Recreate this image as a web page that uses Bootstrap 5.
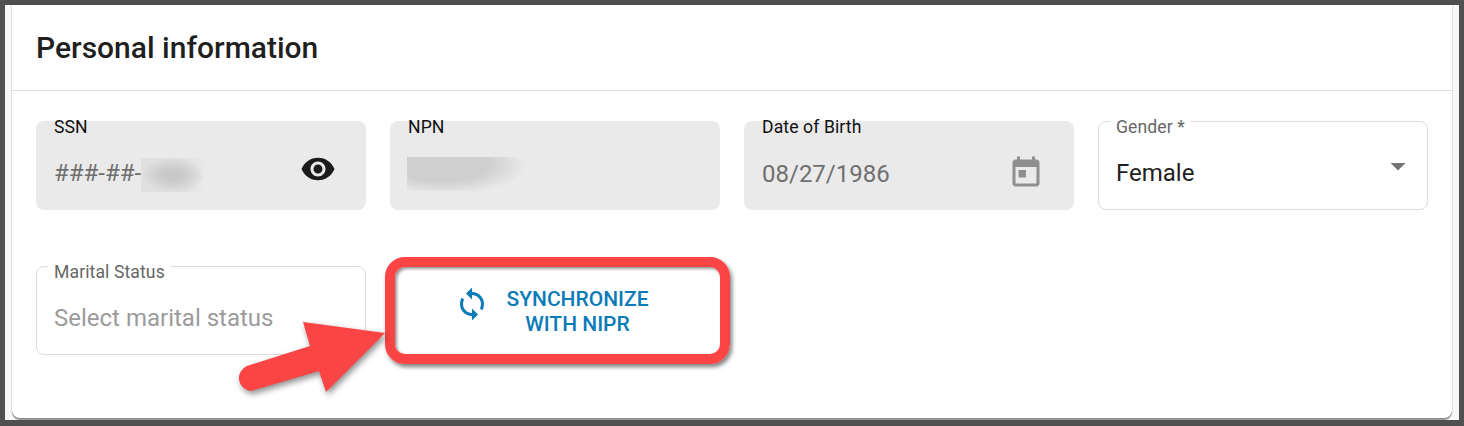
<!DOCTYPE html>
<html lang="en">
<head>
<meta charset="utf-8">
<title>Personal information</title>
<link href="https://cdn.jsdelivr.net/npm/bootstrap@5.3.0/dist/css/bootstrap.min.css" rel="stylesheet">
<style>
html,body{height:100%}
body{background:#505050;padding:5px;font-family:Roboto,"Liberation Sans",sans-serif;overflow:hidden}
.shot-frame{background:#f8f8f8;height:415px;padding:0 7px;position:relative}
.info-card{height:413px;border:0;border-radius:0 0 8px 8px;box-shadow:0 2px 1px rgba(0,0,0,.4),0 0 3px rgba(0,0,0,.12);background:#fff}
.info-head{height:86px;background:#fff;border-bottom:1px solid #dedede;padding:0 24px;font-size:30px;font-weight:500;color:#1f1f1f;line-height:1;padding-top:28px}
.info-body{padding:30px 24px 0}
.fld{height:89px;border-radius:8px;position:relative;padding:0 18px;display:flex;align-items:center;font-size:24px;margin-bottom:56px}
.fld-fill{background:#eaeaea;color:#6f6f6f}
.fld-line{background:#fff;border:1px solid #dcdcdc;color:#1f1f1f;padding-left:17px}
.fld-label{position:absolute;top:-3px;left:18px;font-size:17.6px;line-height:18px;color:#111;letter-spacing:.1px}
.fld-line .fld-label{left:11px;top:-4px;padding:0 6px;background:#fff;color:#666}
.fld-line .fld-value{margin-top:15px}
.fld-fill .fld-value{margin-top:16px}
.ph{color:#9b9b9b}
.mask-a{display:inline-block;width:65px;height:34px;vertical-align:middle;background:radial-gradient(ellipse 32px 17px at 32px 17px,#c9c9c9 30%,rgba(201,201,201,0) 100%),linear-gradient(to right,#e0e0e0 70%,#eaeaea 100%)}
.mask-b{display:block;width:118px;height:34px;margin-left:-1px;background:radial-gradient(ellipse 85px 30px at 35px 8px,#cfcfcf 55%,rgba(207,207,207,0) 100%)}
.fld-end{margin-left:auto;flex:none}
.end-eye{margin-right:12px;margin-top:6px}
.end-cal{margin-right:12px;margin-top:14px}
.end-caret{margin-right:-7px}
.sync-btn{height:89px;background:#fff;border:0;padding:0 7px 0 0;width:100%;display:flex;align-items:center;justify-content:center;gap:16px;color:#0a7bb9;font-size:21px;font-weight:500;line-height:25px;text-transform:uppercase;position:relative;z-index:2}
.sync-btn svg{margin-bottom:14px;flex:none}
.sync-text{text-align:center;display:block;margin-top:2px}
.sync-wrap{position:relative}
.red-box{position:absolute;left:-5px;top:-9px;width:345px;height:107px;border:10px solid #fb4444;border-radius:20px;box-shadow:2px 3px 4px rgba(0,0,0,.5),inset 2px 2px 3px rgba(0,0,0,.4);z-index:3;pointer-events:none}
.red-arrow{position:absolute;left:-5px;top:-5px;width:1464px;height:426px;z-index:4;pointer-events:none;filter:drop-shadow(2px 3px 3px rgba(0,0,0,.45))}
</style>
</head>
<body>
<div class="shot-frame">
  <div class="card info-card">
    <div class="card-header info-head">Personal information</div>
    <div class="card-body info-body">
      <div class="row gx-4">
        <div class="col-3">
          <div class="fld fld-fill">
            <span class="fld-label">SSN</span>
            <span class="fld-value">###-##-<span class="mask-a"></span></span>
            <svg class="fld-end end-eye" width="36" height="36" viewBox="0 0 24 24" fill="#1b1b1b"><path d="M12 4.5C7 4.5 2.73 7.61 1 12c1.73 4.39 6 7.5 11 7.5s9.27-3.11 11-7.5c-1.73-4.39-6-7.5-11-7.5zM12 17c-2.76 0-5-2.24-5-5s2.24-5 5-5 5 2.24 5 5-2.24 5-5 5zm0-8c-1.66 0-3 1.34-3 3s1.34 3 3 3 3-1.34 3-3-1.34-3-3-3z"/></svg>
          </div>
        </div>
        <div class="col-3">
          <div class="fld fld-fill">
            <span class="fld-label">NPN</span>
            <span class="fld-value"><span class="mask-b"></span></span>
          </div>
        </div>
        <div class="col-3">
          <div class="fld fld-fill">
            <span class="fld-label">Date of Birth</span>
            <span class="fld-value">08/27/1986</span>
            <svg class="fld-end end-cal" width="36" height="36" viewBox="0 0 24 24" fill="#8f8f8f"><path d="M19 3h-1V1h-2v2H8V1H6v2H5c-1.11 0-1.99.9-1.99 2L3 19c0 1.1.89 2 2 2h14c1.1 0 2-.9 2-2V5c0-1.1-.9-2-2-2zm0 16H5V8h14v11zM7 10h5v5H7z"/></svg>
          </div>
        </div>
        <div class="col-3">
          <div class="fld fld-line">
            <span class="fld-label">Gender *</span>
            <span class="fld-value">Female</span>
            <svg class="fld-end end-caret" width="36" height="36" viewBox="0 0 24 24" fill="#757575"><path d="M7 10l5 5 5-5z"/></svg>
          </div>
        </div>
        <div class="col-3">
          <div class="fld fld-line">
            <span class="fld-label">Marital Status</span>
            <span class="fld-value ph">Select marital status</span>
          </div>
        </div>
        <div class="col-3">
          <div class="sync-wrap">
            <button type="button" class="btn sync-btn">
              <svg width="36" height="36" viewBox="0 0 24 24" fill="#0a7bb9"><path d="M12 4V1L8 5l4 4V6c3.31 0 6 2.69 6 6 0 1.01-.25 1.97-.7 2.8l1.46 1.46C19.54 15.03 20 13.57 20 12c0-4.42-3.58-8-8-8zm0 14c-3.31 0-6-2.69-6-6 0-1.01.25-1.97.7-2.8L5.24 7.74C4.46 8.97 4 10.43 4 12c0 4.42 3.58 8 8 8v3l4-4-4-4v3z"/></svg>
              <span class="sync-text">Synchronize<br>with NIPR</span>
            </button>
            <div class="red-box"></div>
          </div>
        </div>
      </div>
    </div>
  </div>
  <svg class="red-arrow" viewBox="0 0 1464 426" fill="#fb4444">
    <path d="M385 333L303 322L310 346L247 366A13 13 0 0 0 251 391L319 371L326 392Z"/>
  </svg>
</div>
<script src="https://cdn.jsdelivr.net/npm/bootstrap@5.3.0/dist/js/bootstrap.bundle.min.js"></script>
</body>
</html>
